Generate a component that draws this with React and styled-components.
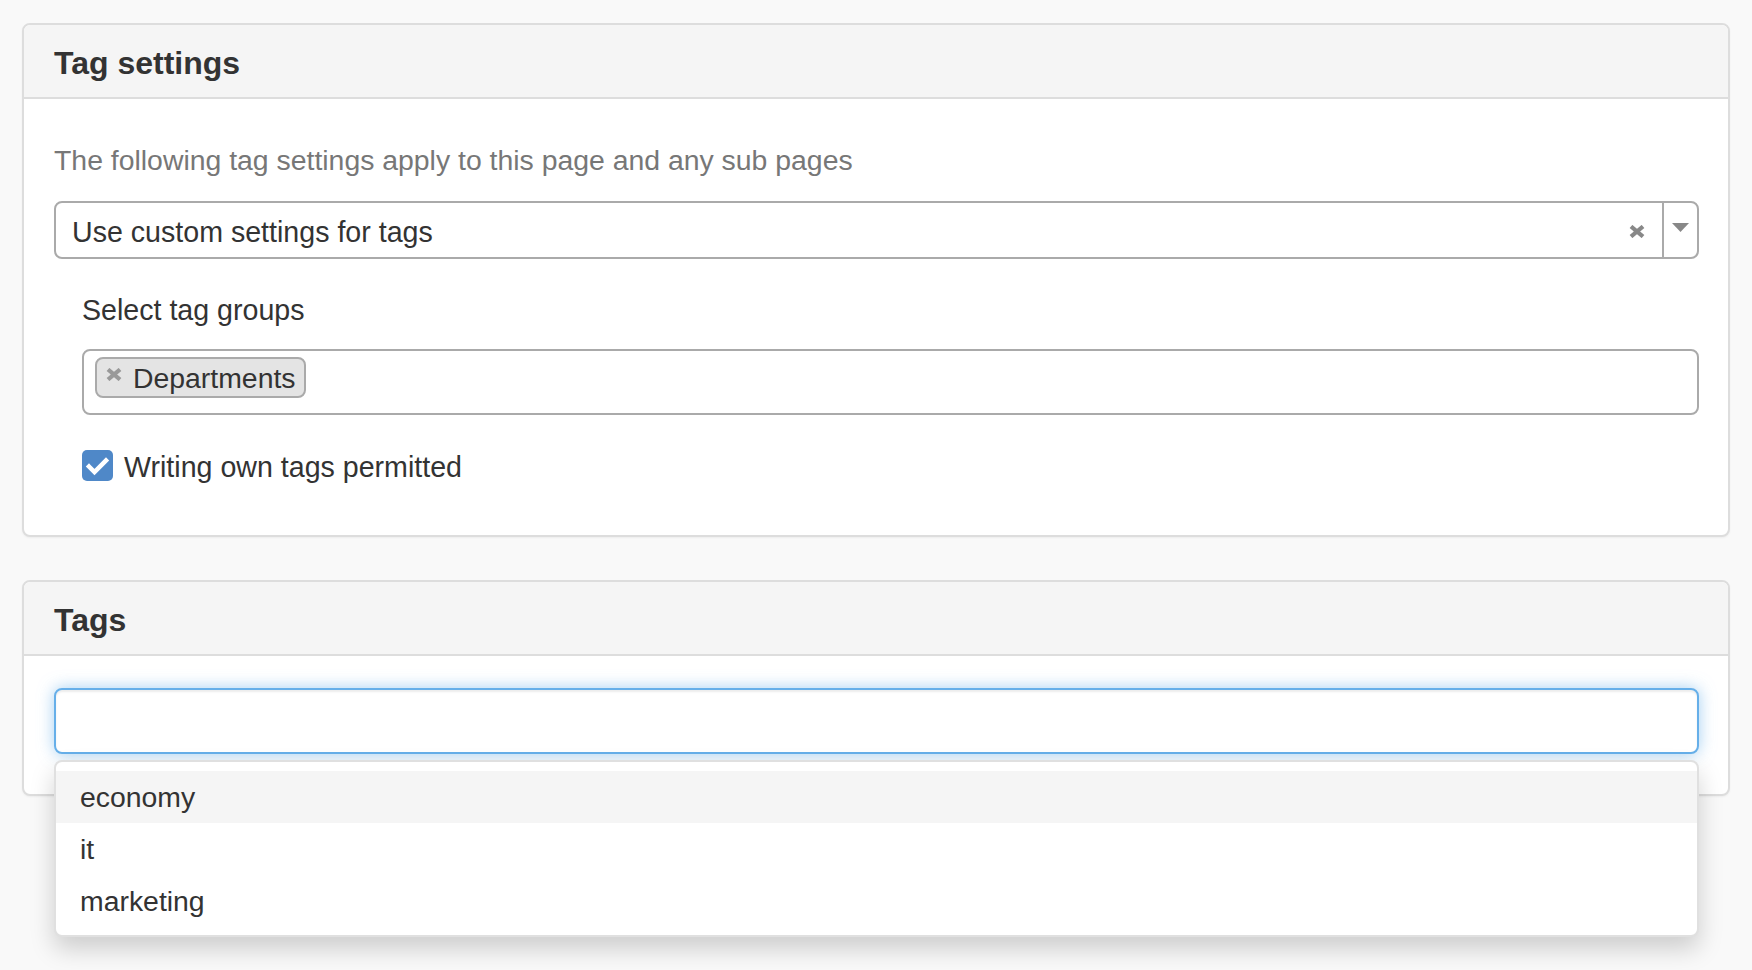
import React from 'react';
import styled, { createGlobalStyle } from 'styled-components';

const GlobalStyle = createGlobalStyle`
  html, body { margin: 0; padding: 0; }
  body {
    background: #f9f9f9;
    font-family: "Liberation Sans", Arial, Helvetica, sans-serif;
    color: #333;
  }
  *, *::before, *::after { box-sizing: border-box; }
`;

const Page = styled.div`
  min-height: 100vh;
  padding: 23px 22px 40px;
  display: flex;
  flex-direction: column;
  gap: 43px;
`;

const Panel = styled.section`
  background: #fff;
  border: 2px solid #ddd;
  border-radius: 8px;
  box-shadow: 0 1px 2px rgba(0, 0, 0, 0.05);
`;

const PanelHeading = styled.header`
  background: #f5f5f5;
  border-bottom: 2px solid #ddd;
  border-radius: 6px 6px 0 0;
  padding: 20px 30px 16px;
`;

const PanelTitle = styled.h3`
  margin: 0;
  font-size: 32px;
  line-height: 36px;
  font-weight: 700;
  color: #333;
`;

const PanelBody = styled.div`
  position: relative;
  padding: ${(p) => p.$pad};
`;

const Description = styled.p`
  margin: 0 0 21px;
  font-size: 28.4px;
  line-height: 40px;
  color: #777;
`;

const SelectBox = styled.div`
  display: flex;
  align-items: center;
  height: 58px;
  border: 2px solid #aaa;
  border-radius: 8px;
  background: #fff;
`;

const SelectValue = styled.span`
  flex: 1;
  padding: 4px 16px 0;
  font-size: 28.6px;
  line-height: 40px;
  color: #333;
  white-space: nowrap;
`;

const ClearIcon = styled.span`
  display: flex;
  margin-right: 17px;
  padding-top: 2px;
`;

const Divider = styled.span`
  align-self: stretch;
  width: 2px;
  background: #aaa;
`;

const ArrowArea = styled.span`
  display: flex;
  align-items: center;
  justify-content: center;
  width: 33px;
  padding-bottom: 5px;
`;

const SubGroup = styled.div`
  margin: 31px 0 0 28px;
`;

const FieldLabel = styled.div`
  font-size: 28.6px;
  line-height: 40px;
  color: #333;
  margin-bottom: 19px;
`;

const TagBox = styled.div`
  display: flex;
  align-items: flex-start;
  flex-wrap: wrap;
  min-height: 66px;
  border: 2px solid #aaa;
  border-radius: 8px;
  padding: 6px 10px 0 11px;
  background: #fff;
`;

const Chip = styled.span`
  display: inline-flex;
  align-items: center;
  gap: 11px;
  height: 41px;
  padding: 0 8px 0 9px;
  border: 2px solid #aaa;
  border-radius: 8px;
  background: #e4e4e4;
  font-size: 28.4px;
  line-height: 36px;
  color: #333;
`;

const ChipRemove = styled.span`
  display: flex;
  margin-bottom: 6px;
`;

const CheckRow = styled.label`
  display: flex;
  align-items: flex-start;
  gap: 11px;
  margin-top: 32px;
  font-size: 28.6px;
  line-height: 40px;
  color: #333;
`;

const CheckBox = styled.span`
  display: flex;
  margin-top: 3px;
  flex-shrink: 0;
`;

const TextInput = styled.div`
  height: 66px;
  border: 2px solid #66afe9;
  border-radius: 8px;
  background: #fff;
  box-shadow: inset 0 2px 2px rgba(0, 0, 0, 0.075), 0 0 16px rgba(102, 175, 233, 0.6);
`;

const Dropdown = styled.ul`
  position: absolute;
  top: 104px;
  left: 30px;
  right: 29px;
  margin: 0;
  padding: 9px 0 8px;
  list-style: none;
  background: #fff;
  border: 2px solid rgba(0, 0, 0, 0.12);
  border-radius: 8px;
  box-shadow: 0 12px 24px rgba(0, 0, 0, 0.175);
  z-index: 10;
`;

const DropdownItem = styled.li`
  padding: 0 24px;
  font-size: 28.4px;
  line-height: 52px;
  color: #333;
  background: ${(p) => (p.$active ? '#f5f5f5' : 'transparent')};
`;

const Cross = ({ color }) => (
  <svg width="16" height="13" viewBox="0 0 16 13" aria-hidden="true">
    <path d="M2 1.5 L14 11.5 M14 1.5 L2 11.5" stroke={color} strokeWidth="4.2" strokeLinecap="butt" fill="none" />
  </svg>
);

const Arrow = () => (
  <svg width="17" height="9" viewBox="0 0 17 9" aria-hidden="true">
    <path d="M0 0 H17 L8.5 9 Z" fill="#888" />
  </svg>
);

const Check = () => (
  <svg width="31" height="31" viewBox="0 0 31 31" aria-hidden="true">
    <rect x="0" y="0" width="31" height="31" rx="5" fill="#4f88c8" />
    <path d="M7 16.5 L12.5 22 L24 10.5" stroke="#fff" strokeWidth="4.5" fill="none" strokeLinecap="square" />
  </svg>
);

const tags = ['economy', 'it', 'marketing'];

export default function App() {
  return (
    <>
      <GlobalStyle />
      <Page>
        <Panel>
          <PanelHeading>
            <PanelTitle>Tag settings</PanelTitle>
          </PanelHeading>
          <PanelBody $pad="41px 29px 48px 30px">
            <Description>The following tag settings apply to this page and any sub pages</Description>
            <SelectBox>
              <SelectValue>Use custom settings for tags</SelectValue>
              <ClearIcon>
                <Cross color="#888" />
              </ClearIcon>
              <Divider />
              <ArrowArea>
                <Arrow />
              </ArrowArea>
            </SelectBox>
            <SubGroup>
              <FieldLabel>Select tag groups</FieldLabel>
              <TagBox>
                <Chip>
                  <ChipRemove>
                    <Cross color="#999" />
                  </ChipRemove>
                  Departments
                </Chip>
              </TagBox>
              <CheckRow>
                <CheckBox>
                  <Check />
                </CheckBox>
                Writing own tags permitted
              </CheckRow>
            </SubGroup>
          </PanelBody>
        </Panel>
        <Panel>
          <PanelHeading>
            <PanelTitle>Tags</PanelTitle>
          </PanelHeading>
          <PanelBody $pad="32px 29px 40px 30px">
            <TextInput />
            <Dropdown>
              {tags.map((t, i) => (
                <DropdownItem key={t} $active={i === 0}>
                  {t}
                </DropdownItem>
              ))}
            </Dropdown>
          </PanelBody>
        </Panel>
      </Page>
    </>
  );
}
